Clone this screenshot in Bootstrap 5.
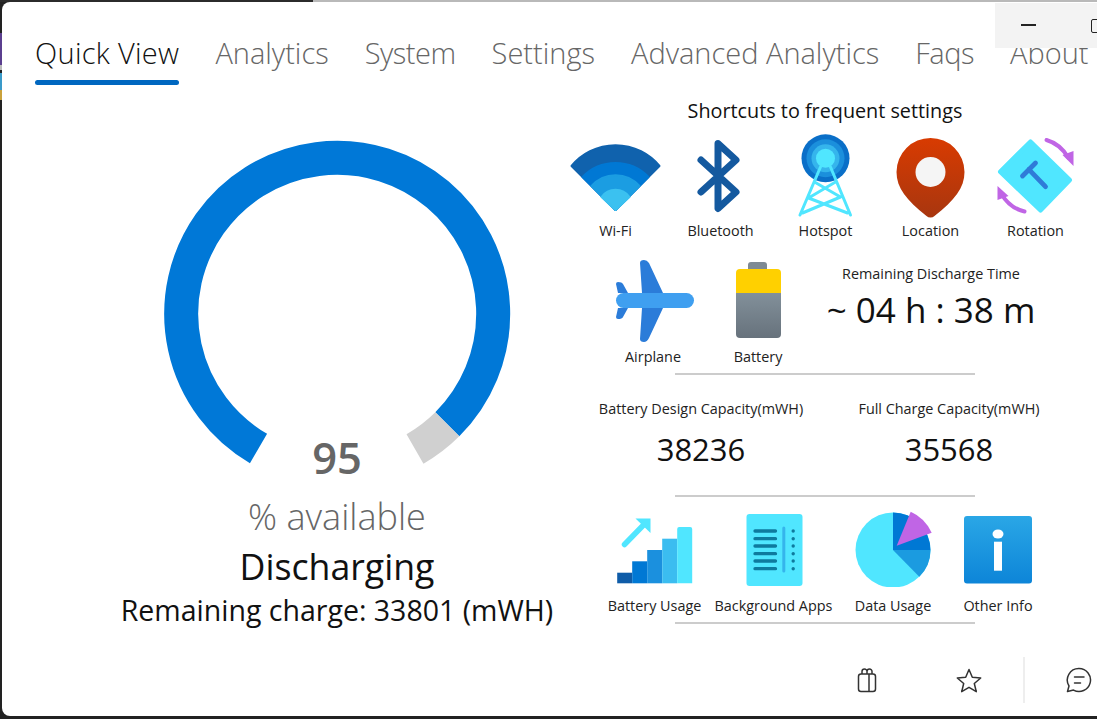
<!DOCTYPE html>
<html lang="en">
<head>
  <meta charset="UTF-8" />
  <meta name="viewport" content="width=device-width, initial-scale=1.0" />
  <title>Quick View</title>
  <link href="https://cdn.jsdelivr.net/npm/bootstrap@5.3.3/dist/css/bootstrap.min.css" rel="stylesheet" />
  <style>
    html, body { height: 100%; }
    body {
      margin: 0;
      overflow: hidden;
      font-family: "Open Sans", "Noto Sans", sans-serif;
      background:
        linear-gradient(90deg, #2b2b2b 313px, #b9b9b9 313px) top left / 100% 2px no-repeat,
        linear-gradient(180deg, #222 33px, #5b3f8f 33px, #5b3f8f 65px, #bbb 65px, #bbb 70px, #222 70px, #222 73px, #3a9ac9 73px, #3a9ac9 90px, #c9a13b 90px, #c9a13b 100px, #222 100px) left top / 2px 100% no-repeat,
        #222;
    }
    .app-window {
      position: relative;
      height: 714px;
      margin: 2px 0 3px 2px;
      background: #fff;
      border-radius: 8px 0 0 8px;
      overflow: hidden;
    }
    .title-controls {
      position: absolute;
      top: 1px;
      right: 0;
      width: 102px;
      height: 45px;
      background: #f3f3f3;
    }
    .title-controls .min-line {
      position: absolute;
      left: 26px;
      top: 21px;
      width: 15px;
      height: 1.5px;
      background: #222;
    }
    .title-controls .max-box {
      position: absolute;
      left: 96px;
      top: 16px;
      width: 14px;
      height: 14px;
      border: 1.5px solid #222;
      border-radius: 2px;
    }
    .app-tabs {
      height: 83px;
      padding-left: 33px;
      gap: 36px;
      flex-wrap: nowrap;
      white-space: nowrap;
    }
    .app-tabs .nav-link {
      position: relative;
      padding: 31px 0 0;
      height: 83px;
      font-size: 29px;
      line-height: 40px;
      font-weight: 300;
      color: #666;
    }
    .app-tabs .nav-link.active { color: #111; letter-spacing: 0.3px; }
    .app-tabs .nav-link.active::after {
      content: "";
      position: absolute;
      left: 0;
      right: 0;
      bottom: 0;
      height: 5px;
      border-radius: 3px;
      background: #0067c0;
    }
    /* Segoe is a bit tighter than Open Sans on these words */
    .app-tabs .tab-tight .nav-link { letter-spacing: -0.5px; }
    .gauge-col { margin-left: 109px; width: 452px; flex: none; }
    .gauge-wrap { position: relative; height: 330px; margin-top: 52px; }
    .gauge-wrap svg { display: block; margin: 0 auto; }
    .gauge-value {
      position: absolute;
      left: 0;
      right: 0;
      top: 292px;
      font-size: 43.5px;
      line-height: 58px;
      font-weight: 600;
      color: #666;
    }
    .gauge-unit { margin-top: 28px; font-size: 36px; line-height: 44px; font-weight: 300; color: #666; }
    .gauge-state { margin-top: 4px; font-size: 35.7px; line-height: 46px; color: #111; }
    .gauge-charge { margin-top: 4px; font-size: 28.5px; line-height: 34px; color: #111; white-space: nowrap; }
    .shortcuts-title { padding-top: 14px; font-size: 19.8px; line-height: 24px; color: #111; text-align: center; width: 524px; }
    .shortcut { display: flex; flex-direction: column; align-items: center; flex: none; font-size: 14.4px; line-height: 20px; color: #222; white-space: nowrap; }
    .shortcut svg { display: block; }
    .row-one { margin-top: 10px; }
    .row-one .shortcut { width: 105px; }
    .row-one .icon-box, .row-two .icon-box { height: 88px; }
    .row-two { margin-top: 17px; padding-left: 37.5px; }
    .row-two .shortcut { width: 105px; }
    .row-two .shortcut span { margin-top: 1px; }
    .discharge { width: 241px; flex: none; text-align: center; color: #111; }
    .info-label { font-size: 14.4px; line-height: 20px; white-space: nowrap; color: #222; }
    .discharge .info-label { margin-top: 6px; }
    .discharge-time { margin-top: 6px; font-size: 35px; line-height: 40px; white-space: nowrap; }
    .section-rule { margin: 0 0 0 112px; width: 300px; height: 2px; border: 0; background: #ccc; opacity: 1; }
    .rule-a { margin-top: 6px; }
    .rule-b { margin-top: 25px; }
    .rule-c { margin-top: 6px; }
    .row-three { margin-top: 24px; padding-left: 14px; }
    .capacity { width: 248px; flex: none; text-align: center; color: #111; }
    .capacity-value { margin-top: 10px; margin-bottom: 1px; font-size: 31px; line-height: 40px; }
    .row-four { margin-top: 14px; padding-left: 32px; }
    .row-four .icon-box { height: 76px; margin-bottom: 9px; }
    .w-119 { width: 119px; }
    .w-120 { width: 120px; }
    .w-90 { width: 90px; }
    .app-footer { height: 46px; margin-top: auto; margin-bottom: 13px; padding-right: 5px; }
    .footer-icon { display: block; }
    .star-icon { margin-left: 79px; }
    .footer-sep { width: 2px; height: 46px; margin: 0 41px; background: #eee; }
  </style>
</head>
<body>
  <div class="app-window d-flex flex-column">
    <ul class="nav app-tabs">
      <li class="nav-item"><a class="nav-link active" href="#">Quick View</a></li>
      <li class="nav-item"><a class="nav-link" href="#">Analytics</a></li>
      <li class="nav-item tab-tight"><a class="nav-link" href="#">System</a></li>
      <li class="nav-item"><a class="nav-link" href="#">Settings</a></li>
      <li class="nav-item"><a class="nav-link" href="#">Advanced Analytics</a></li>
      <li class="nav-item tab-tight"><a class="nav-link" href="#">Faqs</a></li>
      <li class="nav-item"><a class="nav-link" href="#">About</a></li>
    </ul>

    <!-- window buttons sit on top of the tab strip -->
    <div class="title-controls"><span class="min-line"></span><span class="max-box"></span></div>

    <div class="d-flex flex-grow-1">
      <div class="gauge-col text-center">
        <div class="gauge-wrap">
          <svg width="360" height="330" viewBox="157 137 360 330" fill="none">
            <path d="M258.5 448.5A156 156 0 1 1 447.3 424.3" stroke="#0078d7" stroke-width="34" />
            <path d="M447.3 424.3A156 156 0 0 1 415 449" stroke="#d0d0d0" stroke-width="34" />
          </svg>
          <div class="gauge-value">95</div>
        </div>
        <div class="gauge-unit">% available</div>
        <div class="gauge-state">Discharging</div>
        <div class="gauge-charge">Remaining charge: 33801 (mWH)</div>
      </div>

      <div class="flex-grow-1">
        <div class="shortcuts-title">Shortcuts to frequent settings</div>

        <div class="d-flex row-one">
          <div class="shortcut">
            <div class="icon-box">
              <svg width="104" height="88" viewBox="563.500 133 104 88">
                <g stroke-width="2" stroke-linejoin="round">
                  <path d="M571 166A57 57 0 0 1 659 166L615 210Z" fill="#1062ad" stroke="#1062ad" />
                  <path d="M582 177A46 46 0 0 1 648 177L615 210Z" fill="#0078d4" stroke="#0078d4" />
                  <path d="M591 186A32 32 0 0 1 639 186L615 210Z" fill="#1b9de2" stroke="#1b9de2" />
                  <path d="M601 197A17 17 0 0 1 629 197L615 210Z" fill="#3bc1f0" stroke="#3bc1f0" />
                </g>
              </svg>
            </div>
            <span>Wi-Fi</span>
          </div>
          <div class="shortcut">
            <div class="icon-box">
              <svg width="104" height="88" viewBox="668.500 133 104 88">
                <path d="M700.500 160L735.500 192L717.500 208.500V143.500L735.500 160L700.500 192" fill="none" stroke="#14599f" stroke-width="7" stroke-linecap="round" stroke-linejoin="round" />
              </svg>
            </div>
            <span>Bluetooth</span>
          </div>
          <div class="shortcut">
            <div class="icon-box">
              <svg width="104" height="88" viewBox="773.500 133 104 88">
                <circle cx="825" cy="158.300" r="24" fill="#0a6fc8" />
                <circle cx="825" cy="158.300" r="19" fill="#1b8fdc" />
                <circle cx="825" cy="158.300" r="14" fill="#35b5ec" />
                <circle cx="825" cy="158.300" r="9.500" fill="#50e6ff" />
                <path d="M820 167L799.500 215M830 167L850 215M814 182L840 197M835 182L808 198M808 198L847 213M840 197L802 213" fill="none" stroke="#50e6ff" stroke-width="3" stroke-linecap="round" />
              </svg>
            </div>
            <span>Hotspot</span>
          </div>
          <div class="shortcut">
            <div class="icon-box">
              <svg width="104" height="88" viewBox="878.500 133 104 88">
                <defs>
                  <linearGradient id="pinFill" x1="0" y1="0" x2="0" y2="1">
                    <stop offset="0" stop-color="#d83b01" />
                    <stop offset="1" stop-color="#a8360f" />
                  </linearGradient>
                </defs>
                <path d="M896 172a34 34 0 0 1 68 0c0 16-10 28-30 44a6 6 0 0 1-8 0c-20-16-30-28-30-44z" fill="url(#pinFill)" />
                <circle cx="930" cy="172" r="15" fill="#f5f5f5" />
              </svg>
            </div>
            <span>Location</span>
          </div>
          <div class="shortcut">
            <div class="icon-box">
              <svg width="104" height="88" viewBox="983.500 133 104 88">
                <path d="M1030 142L1069 180L1040 210L1000 171.700Z" fill="#50e6ff" stroke="#50e6ff" stroke-width="5" stroke-linejoin="round" />
                <path d="M1022 176L1035 163M1028.300 169.300L1045 186.700" fill="none" stroke="#2f7bd8" stroke-width="4.800" stroke-linecap="round" />
                <path d="M1046 140Q1060 144 1068 158" fill="none" stroke="#c065e5" stroke-width="4" stroke-linecap="round" />
                <path d="M1062 155L1073 151V166Z" fill="#c065e5" />
                <path d="M1024 211.500Q1009 208 1001 194" fill="none" stroke="#c065e5" stroke-width="4" stroke-linecap="round" />
                <path d="M997 186V200L1008 196Z" fill="#c065e5" />
              </svg>
            </div>
            <span>Rotation</span>
          </div>
        </div>

        <div class="d-flex row-two">
          <div class="shortcut">
            <div class="icon-box">
              <svg width="104" height="88" viewBox="601 258 104 88">
                <path d="M640 263Q640 260 644 260Q647 260 649 263L663 293H642ZM642 308H663L649 338Q647 342 644 342Q640 342 640 339ZM616 284Q616 282 618 282Q622 282 623 284L628 293H618ZM618 308H628L623 317Q622 319 618 319Q616 319 616 317Z" fill="#2b7cd9" />
                <rect x="616" y="293" width="78" height="15" rx="7.500" fill="#3f9ff0" />
              </svg>
            </div>
            <span>Airplane</span>
          </div>
          <div class="shortcut">
            <div class="icon-box">
              <svg width="104" height="88" viewBox="706 258 104 88">
                <defs>
                  <linearGradient id="cellFill" x1="0" y1="0" x2="0" y2="1">
                    <stop offset="0" stop-color="#82909a" />
                    <stop offset="1" stop-color="#67727c" />
                  </linearGradient>
                </defs>
                <path d="M748 270v-5q0-3 3-3h13q3 0 3 3v5z" fill="#7e8a94" />
                <path d="M736 293h45v41q0 4-4 4h-37q-4 0-4-4z" fill="url(#cellFill)" />
                <path d="M736 293v-20q0-4 4-4h37q4 0 4 4v20z" fill="#ffd000" />
              </svg>
            </div>
            <span>Battery</span>
          </div>
          <div class="discharge">
            <div class="info-label">Remaining Discharge Time</div>
            <div class="discharge-time">~ 04 h : 38 m</div>
          </div>
        </div>
        <hr class="section-rule rule-a" />

        <div class="d-flex row-three">
          <div class="capacity">
            <div class="info-label">Battery Design Capacity(mWH)</div>
            <div class="capacity-value">38236</div>
          </div>
          <div class="capacity">
            <div class="info-label">Full Charge Capacity(mWH)</div>
            <div class="capacity-value">35568</div>
          </div>
        </div>
        <hr class="section-rule rule-b" />

        <div class="d-flex row-four">
          <div class="shortcut w-119">
            <div class="icon-box">
              <svg width="104" height="76" viewBox="602.500 511 104 76">
                <rect x="616.700" y="572.700" width="15" height="10.600" fill="#0f5ca8" />
                <rect x="631.700" y="561.300" width="15" height="22" fill="#0078d4" />
                <rect x="646.700" y="550" width="15" height="33.300" fill="#1b90de" />
                <rect x="661.700" y="538.700" width="15" height="44.600" fill="#3bbdf0" />
                <path d="M676.700 529q0-2 2-2h11q2 0 2 2v54.300h-15z" fill="#50e6ff" />
                <path d="M624 544.500L644 524" fill="none" stroke="#50e6ff" stroke-width="5.500" stroke-linecap="round" />
                <path d="M635 518.500H650V533Z" fill="#50e6ff" />
              </svg>
            </div>
            <span>Battery Usage</span>
          </div>
          <div class="shortcut w-119">
            <div class="icon-box">
              <svg width="104" height="76" viewBox="721.500 511 104 76">
                <rect x="746" y="514" width="56" height="72" rx="3" fill="#50e6ff" />
                <path d="M754.500 531H775M754.500 538.700H775M754.500 546H775M754.500 553.700H775M754.500 561H775M754.500 568.700H775" stroke="#0e7a9e" stroke-width="3.300" stroke-linecap="round" />
                <path d="M783.300 528V571" stroke="#35b5ec" stroke-width="3" stroke-linecap="round" />
                <g fill="#0e7a9e">
                  <circle cx="792.700" cy="531" r="1.700" />
                  <circle cx="792.700" cy="538.700" r="1.700" />
                  <circle cx="792.700" cy="546" r="1.700" />
                  <circle cx="792.700" cy="553.700" r="1.700" />
                  <circle cx="792.700" cy="561" r="1.700" />
                  <circle cx="792.700" cy="568.700" r="1.700" />
                </g>
              </svg>
            </div>
            <span>Background Apps</span>
          </div>
          <div class="shortcut w-120">
            <div class="icon-box">
              <svg width="104" height="76" viewBox="841 511 104 76">
                <circle cx="893" cy="550" r="37.500" fill="#50e6ff" />
                <path d="M893 550H930.500A37.500 37.500 0 0 1 919.300 576.800Z" fill="#1b9be0" />
                <path d="M893 550V512.500A37.500 37.500 0 0 1 930.500 550Z" fill="#0078d4" />
                <path d="M896.700 545.700L910.700 511.700Q925 518 931.700 532.700Z" fill="#c065e5" />
              </svg>
            </div>
            <span>Data Usage</span>
          </div>
          <div class="shortcut w-90">
            <div class="icon-box">
              <svg width="80" height="76" viewBox="958 511 80 76">
                <defs>
                  <linearGradient id="infoFill" x1="0" y1="0" x2="0" y2="1">
                    <stop offset="0" stop-color="#2aa7e6" />
                    <stop offset="1" stop-color="#0d85d8" />
                  </linearGradient>
                </defs>
                <rect x="964" y="516" width="68" height="67.500" rx="3" fill="url(#infoFill)" />
                <ellipse cx="998" cy="534" rx="5.500" ry="4.500" fill="#fff" />
                <rect x="994" y="541.700" width="8" height="29" fill="#fff" />
              </svg>
            </div>
            <span>Other Info</span>
          </div>
        </div>
        <hr class="section-rule rule-c" />
      </div>
    </div>

    <div class="app-footer d-flex align-items-center justify-content-end">
      <svg class="footer-icon" width="20" height="25" viewBox="857 669 20 25" fill="none" stroke="#333" stroke-width="1.500" stroke-linejoin="round">
        <rect x="858.500" y="675" width="17" height="17.500" rx="2.500" />
        <path d="M869 675V692.500M862 675V672.500a2.500 2.500 0 0 1 5 0V675M867 675V672.500a2.500 2.500 0 0 1 5 0V675" />
      </svg>
      <svg class="footer-icon star-icon" width="26" height="25" viewBox="956 669 26 25" fill="none" stroke="#333" stroke-width="1.500" stroke-linejoin="round">
        <path d="M969 670.500L972.300 678.300L980.700 679L974.300 684.500L976.300 692.700L969 688.300L961.700 692.700L963.700 684.500L957.300 679L965.700 678.300Z" />
      </svg>
      <span class="footer-sep"></span>
      <svg class="footer-icon" width="26" height="26" viewBox="1066 668 26 26" fill="none" stroke="#333" stroke-width="1.500" stroke-linejoin="round" stroke-linecap="round">
        <path d="M1079 669.500a11.500 11.500 0 1 1-5.500 21.600L1067.500 692.500L1069 687a11.500 11.500 0 0 1 10-17.500Z" />
        <path d="M1074.500 678H1084M1074.500 684H1080.500" />
      </svg>
    </div>
  </div>
  <script src="https://cdn.jsdelivr.net/npm/bootstrap@5.3.3/dist/js/bootstrap.bundle.min.js"></script>
</body>
</html>
